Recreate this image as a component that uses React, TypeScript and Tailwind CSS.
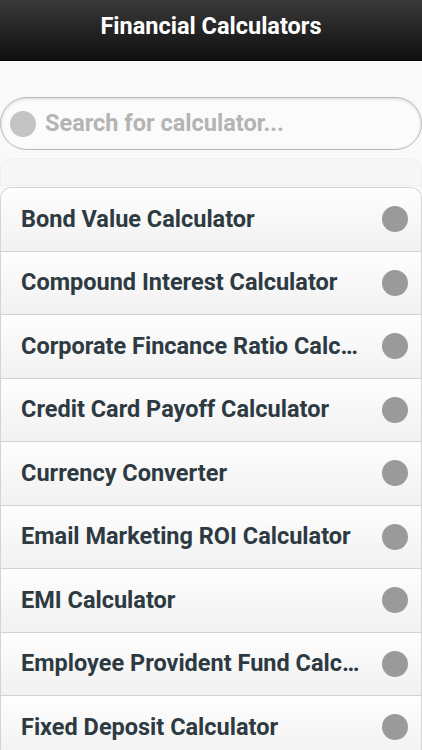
import React from "react";

const items = [
  "Bond Value Calculator",
  "Compound Interest Calculator",
  "Corporate Fincance Ratio Calc…",
  "Credit Card Payoff Calculator",
  "Currency Converter",
  "Email Marketing ROI Calculator",
  "EMI Calculator",
  "Employee Provident Fund Calc…",
  "Fixed Deposit Calculator",
];

export default function App() {
  return (
    <div
      className="w-[422px] h-[750px] overflow-hidden bg-[#f9f9f9] flex flex-col"
      style={{ fontFamily: "Roboto, 'Liberation Sans', sans-serif" }}
    >
      <div className="h-[61px] shrink-0 flex items-center justify-center bg-gradient-to-b from-[#3a3a3a] to-[#101010] border-b border-[#000]">
        <span className="text-white font-bold text-[23.5px] pb-[6px]">Financial Calculators</span>
      </div>
      <div className="h-[36px] shrink-0" />
      <div className="shrink-0 h-[53px] mx-0 rounded-full border border-[#b8b8b8] bg-[#fbfbfb] shadow-[inset_0_1px_3px_rgba(0,0,0,0.15)] flex items-center pl-[9px]">
        <div className="w-[26px] h-[26px] rounded-full bg-[#c4c4c4] shrink-0" />
        <span className="ml-[9px] text-[23.5px] font-bold text-[#b4b4b4]">Search for calculator...</span>
      </div>
      <div className="h-[8px] shrink-0" />
      <div className="shrink-0 h-[28px] rounded-tl-[12px] rounded-tr-[12px] border border-[#efefef] bg-[#f7f7f7]" />
      <div className="shrink-0 mt-[1px] rounded-t-[12px] border-t border-l border-r border-[#d4d4d4] overflow-hidden">
        {items.map((t) => (
          <div
            key={t}
            className="h-[63.5px] flex items-center pl-[20px] pr-[13px] bg-gradient-to-b from-[#fefefe] to-[#f1f1f1] border-b border-[#d2d2d2]"
          >
            <span className="flex-1 min-w-0 whitespace-nowrap text-[23.5px] font-bold text-[#2e3a42]">{t}</span>
            <div className="w-[26px] h-[26px] rounded-full bg-[#9a9a9a] shrink-0" />
          </div>
        ))}
      </div>
    </div>
  );
}
